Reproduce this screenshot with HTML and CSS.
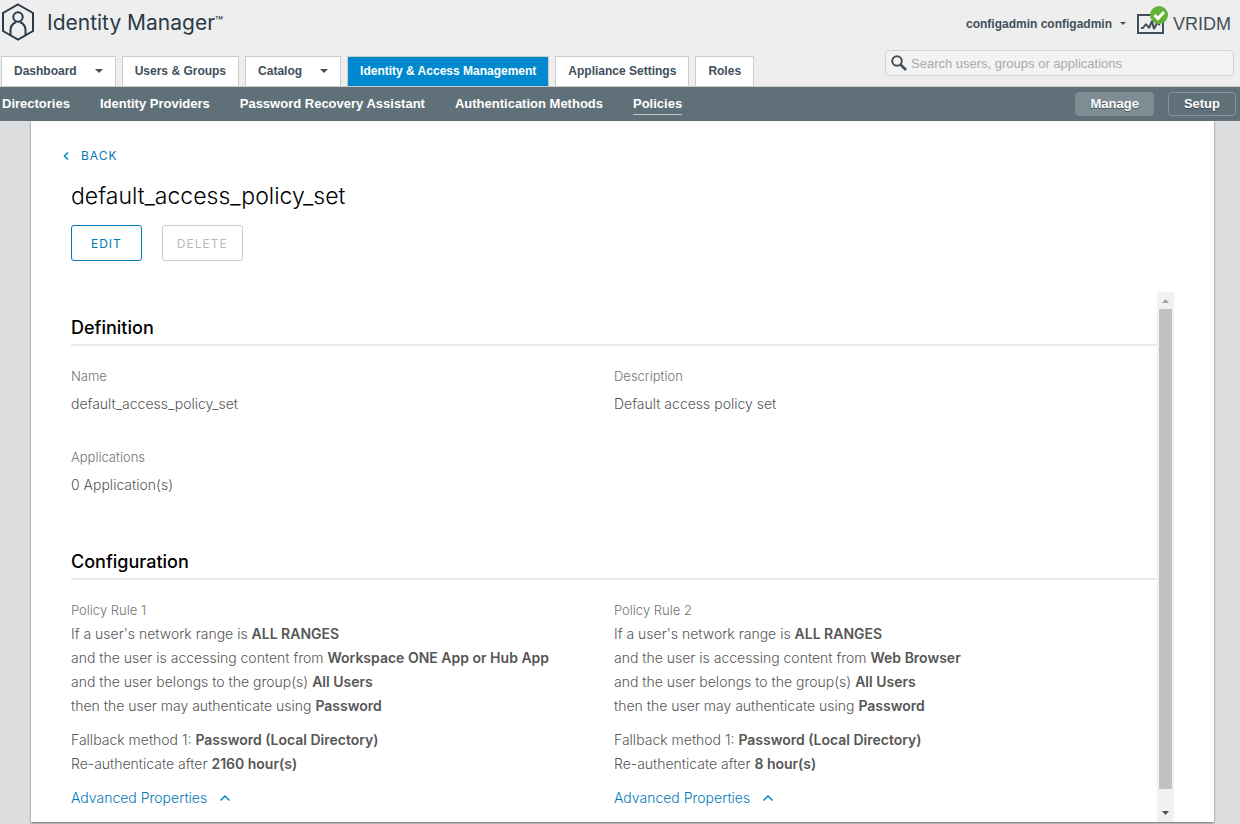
FILE: index.html
```html
<!DOCTYPE html>
<html lang="en">
<head>
<meta charset="utf-8">
<title>Identity Manager</title>
<link rel="stylesheet" href="styles.css">
</head>
<body>
<header class="header">
  <div class="brand-row">
    <div class="brand">
      <svg class="brand-logo" width="34" height="38" viewBox="0 0 34 38" fill="none" stroke="#2b3a49" stroke-width="2">
        <path d="M17 1.500 32 10v18L17 36.500 2 28V10Z"/>
        <circle cx="17" cy="14" r="4.700"/>
        <path d="M9.500 32.500V27c0-4.500 2.500-6.500 5.500-8M24.500 32.500V27c0-4.500-2.500-6.500-5.500-8"/>
      </svg>
      <span class="brand-name">Identity Manager<sup class="tm">™</sup></span>
    </div>
    <div class="account">
      <button class="user-menu" type="button">configadmin configadmin<span class="caret caret-small"></span></button>
      <svg width="31" height="30" viewBox="0 0 31 30" fill="none">
        <path d="M1 9h25v18H1z" stroke="#424e5a" stroke-width="2"/>
        <path d="M4 22h2l3-4 3 4 3-7 2 8 3-6 3 2" stroke="#424e5a" stroke-width="2" stroke-linejoin="bevel"/>
        <circle cx="22" cy="9" r="9" fill="#62b236"/>
        <path d="m17.500 9 3.500 3.500 6-6.500" stroke="#fff" stroke-width="3"/>
      </svg>
      <span class="tenant">VRIDM</span>
    </div>
  </div>
  <div class="tab-row">
    <nav class="tabs">
      <a class="tab" href="#">Dashboard<span class="caret"></span></a>
      <a class="tab" href="#">Users &amp; Groups</a>
      <a class="tab" href="#">Catalog<span class="caret"></span></a>
      <a class="tab tab-active" href="#">Identity &amp; Access Management</a>
      <a class="tab" href="#">Appliance Settings</a>
      <a class="tab" href="#">Roles</a>
    </nav>
    <label class="search">
      <svg width="16" height="16" viewBox="0 0 16 16" fill="none" stroke="#424e5a"><circle cx="6" cy="6" r="4.800" stroke-width="2"/><path d="m9.500 9.500 5.500 5.500" stroke-width="2.500"/></svg>
      <input class="search-input" type="search" aria-label="Search" placeholder="Search users, groups or applications">
    </label>
  </div>
</header>
<div class="subnav">
  <nav class="subnav-links">
    <a class="subnav-link" href="#">Directories</a>
    <a class="subnav-link" href="#">Identity Providers</a>
    <a class="subnav-link" href="#">Password Recovery Assistant</a>
    <a class="subnav-link" href="#">Authentication Methods</a>
    <a class="subnav-link subnav-current" href="#">Policies</a>
  </nav>
  <div class="modes">
    <button class="mode mode-active" type="button">Manage</button>
    <button class="mode" type="button">Setup</button>
  </div>
</div>
<main class="panel">
  <a class="back" href="#"><svg width="6" height="8" viewBox="0 0 6 8" fill="none" stroke="#0089cf" stroke-width="1.500"><path d="M5 .5 1.500 4 5 7.500"/></svg>BACK</a>
  <h1 class="title">default_access_policy_set</h1>
  <div class="actions">
    <button class="button" type="button">EDIT</button>
    <button class="button button-muted" type="button" disabled>DELETE</button>
  </div>
  <div class="viewport">
    <div class="content">
      <section class="section">
        <h2 class="section-title">Definition</h2>
        <dl class="columns fields">
          <div><dt class="label">Name</dt><dd class="value">default_access_policy_set</dd></div>
          <div><dt class="label">Description</dt><dd class="value">Default access policy set</dd></div>
          <div><dt class="label">Applications</dt><dd class="value">0 Application(s)</dd></div>
        </dl>
      </section>
      <section class="section">
        <h2 class="section-title">Configuration</h2>
        <div class="columns">
          <article>
            <h3 class="label">Policy Rule 1</h3>
            <p class="rule">If a user's network range is <b>ALL RANGES</b><br>and the user is accessing content from <b>Workspace ONE App or Hub App</b><br>and the user belongs to the group(s) <b>All Users</b><br>then the user may authenticate using <b>Password</b></p>
            <p class="rule">Fallback method 1: <b>Password (Local Directory)</b><br>Re-authenticate after <b>2160 hour(s)</b></p>
            <a class="advanced" href="#">Advanced Properties<svg width="12" height="8" viewBox="0 0 12 8" fill="none" stroke="#0089cf" stroke-width="1.500"><path d="m1.500 6.500 4.500-4.500 4.500 4.500"/></svg></a>
          </article>
          <article>
            <h3 class="label">Policy Rule 2</h3>
            <p class="rule">If a user's network range is <b>ALL RANGES</b><br>and the user is accessing content from <b>Web Browser</b><br>and the user belongs to the group(s) <b>All Users</b><br>then the user may authenticate using <b>Password</b></p>
            <p class="rule">Fallback method 1: <b>Password (Local Directory)</b><br>Re-authenticate after <b>8 hour(s)</b></p>
            <a class="advanced" href="#">Advanced Properties<svg width="12" height="8" viewBox="0 0 12 8" fill="none" stroke="#0089cf" stroke-width="1.500"><path d="m1.500 6.500 4.500-4.500 4.500 4.500"/></svg></a>
          </article>
        </div>
      </section>
    </div>
    <div class="scrollbar" aria-hidden="true">
      <svg width="17" height="17" viewBox="0 0 17 17"><path d="M5 11h7L8.500 7z" fill="#a3a3a3"/></svg>
      <span class="thumb"></span>
      <svg width="17" height="17" viewBox="0 0 17 17"><path d="M5 6h7l-3.500 4z" fill="#505050"/></svg>
    </div>
  </div>
</main>
</body>
</html>
```
FILE: styles.css
```css
* { box-sizing: border-box; }
body {
  margin: 0;
  min-height: 100vh;
  display: flex;
  flex-direction: column;
  background: #dcddde;
  color: #565656;
  font-family: "Liberation Sans", Arial, sans-serif;
}
a { color: inherit; text-decoration: none; }
button { font: inherit; color: inherit; cursor: pointer; }
h1, h2, h3, p, dl, dd { margin: 0; }

.header { background: #eee; border-bottom: 1px solid #ccc; }
.brand-row {
  display: flex;
  justify-content: space-between;
  height: 50px;
  padding: 0 9px 0 1px;
}
.brand { display: flex; gap: 12px; padding-top: 3px; color: #2b3a49; }
.brand-name { font: 21px/40px Inter, sans-serif; }
.tm { font-size: 13px; line-height: 10px; vertical-align: 4px; }
.account { display: flex; gap: 5px; padding-top: 6px; color: #424e5a; }
.user-menu {
  display: flex;
  align-items: center;
  gap: 8px;
  height: 35px;
  margin-right: 6px;
  padding: 0;
  border: 0;
  background: none;
  font-size: 12px;
  font-weight: bold;
}
.caret { border: 4px solid transparent; border-top-color: #424e5a; border-bottom: 0; }
.caret-small { border-width: 3px; border-bottom: 0; }
.tenant { font-size: 18px; line-height: 36px; }

.tab-row { display: flex; justify-content: space-between; height: 36px; padding: 0 6px 0 1px; }
.tabs { display: flex; gap: 6px; padding-top: 6px; }
.tab {
  display: flex;
  align-items: center;
  gap: 18px;
  padding: 0 12px 2px;
  border: 1px solid #ccc;
  border-bottom: 0;
  background: #fff;
  color: #424e5a;
  font-size: 12px;
  font-weight: bold;
}
.tab-active { background: #0089cf; color: #fff; }
.search {
  display: flex;
  align-items: center;
  gap: 4px;
  width: 349px;
  height: 26px;
  padding: 0 5px;
  border: 1px solid #d4d4d4;
  border-radius: 4px;
  background: #f3f3f3;
}
.search-input {
  flex: 1;
  min-width: 0;
  padding: 0;
  border: 0;
  outline: 0;
  background: none;
  font: 13px "Liberation Sans", Arial, sans-serif;
}
.search-input::placeholder { color: #aaa; }

.subnav {
  display: flex;
  justify-content: space-between;
  align-items: center;
  height: 34px;
  padding: 0 4px 0 2px;
  background: #5f7078;
  color: #fff;
  font-size: 13px;
  font-weight: bold;
}
.subnav-links { display: flex; gap: 30px; }
.subnav-link { padding: 2px 0 1px; border-bottom: 1px solid transparent; line-height: 18px; }
.subnav-current { border-color: #bcc4c8; }
.modes { display: flex; gap: 14px; }
.mode {
  height: 24px;
  padding: 0 15px 1px;
  border: 1px solid #84929a;
  border-radius: 4px;
  background: none;
  text-shadow: 0 1px 1px #3d4b53;
}
.mode-active { padding: 0 14px 1px; background: #7e8d94; border-color: #7e8d94; }

.panel {
  flex: 1;
  display: flex;
  flex-direction: column;
  align-items: flex-start;
  margin: 0 26px 2px 31px;
  padding: 26px 40px 0;
  background: #fff;
  box-shadow: 0 1px 2px #666;
  font-family: Inter, sans-serif;
  font-size: 14px;
  font-weight: 300;
}
.back {
  display: flex;
  align-items: center;
  gap: 12px;
  margin-left: -8px;
  color: #0079b8;
  font-size: 12px;
  font-weight: 400;
  letter-spacing: 1px;
  line-height: 18px;
}
.title { padding: 15px 0 13px; color: #000; font-size: 23px; font-weight: 300; line-height: 32px; }
.actions { display: flex; gap: 20px; }
.button {
  height: 36px;
  padding: 0 19px;
  border: 1px solid #0079b8;
  border-radius: 3px;
  background: none;
  color: #0079b8;
  font-size: 12px;
  font-weight: 400;
  letter-spacing: 1px;
}
.button-muted { padding: 0 14px; border-color: #ccc; color: #bbb; }

.viewport { flex: 1; align-self: stretch; display: flex; margin-top: 31px; }
.content { flex: 1; padding-top: 24px; }
.section-title {
  padding-bottom: 4px;
  border-bottom: 2px solid #e8e8e8;
  color: #000;
  font-size: 18px;
  font-weight: 500;
  line-height: 24px;
}
.columns { display: grid; grid-template-columns: 1fr 1fr; padding-top: 20px; }
.fields { row-gap: 31px; padding-bottom: 53px; }
.label { color: #737373; font-size: 13px; font-weight: 300; line-height: 20px; }
.value { padding-top: 6px; line-height: 24px; }
.rule { padding-top: 2px; padding-bottom: 8px; line-height: 24px; }
.rule b { font-weight: 600; }
.advanced {
  display: inline-flex;
  align-items: center;
  gap: 12px;
  padding-top: 2px;
  color: #0079b8;
  line-height: 24px;
}
.scrollbar {
  display: flex;
  flex-direction: column;
  width: 17px;
  background: #f1f1f1;
}
.thumb { flex: 1; margin: 0 2px 16px; background: #c1c1c1; }
```
